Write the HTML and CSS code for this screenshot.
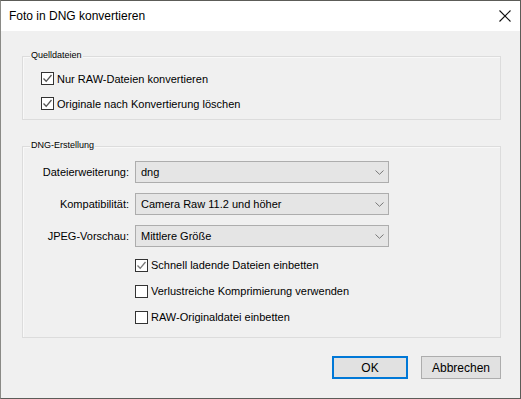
FILE: index.html
```html
<!DOCTYPE html>
<html lang="de">
<head>
  <meta charset="UTF-8" />
  <title>Foto in DNG konvertieren</title>
  <link rel="stylesheet" href="styles.css">
</head>
<body>

  <div class="window">
    <!-- Titelleiste -->
    <div class="titlebar">
      <span class="title">Foto in DNG konvertieren</span>
      <svg class="close" width="12" height="12" viewBox="0 0 12 12">
        <path d="M0.5 0.5 L11.5 11.5 M11.5 0.5 L0.5 11.5" stroke="#111" stroke-width="1.1" fill="none" />
      </svg>
    </div>

    <div class="content">
      <!-- Quelldateien -->
      <div class="group group-source">
        <span class="legend">Quelldateien</span>
        <div class="check">
          <span class="box"><svg width="11" height="11" viewBox="0 0 11 11"><path d="M1.5 5.5 L4.2 8.3 L9.5 2" stroke="#555" stroke-width="1.3" fill="none" /></svg></span>
          Nur RAW-Dateien konvertieren
        </div>
        <div class="check">
          <span class="box"><svg width="11" height="11" viewBox="0 0 11 11"><path d="M1.5 5.5 L4.2 8.3 L9.5 2" stroke="#555" stroke-width="1.3" fill="none" /></svg></span>
          Originale nach Konvertierung löschen
        </div>
      </div>

      <!-- DNG-Erstellung -->
      <div class="group group-dng">
        <span class="legend">DNG-Erstellung</span>
        <div class="fields">
          <span class="field-label">Dateierweiterung:</span>
          <div class="select"><span>dng</span><svg width="9" height="5" viewBox="0 0 9 5"><path d="M0.5 0.5 L4.5 4.3 L8.5 0.5" stroke="#777" fill="none" /></svg></div>

          <span class="field-label">Kompatibilität:</span>
          <div class="select"><span>Camera Raw 11.2 und höher</span><svg width="9" height="5" viewBox="0 0 9 5"><path d="M0.5 0.5 L4.5 4.3 L8.5 0.5" stroke="#777" fill="none" /></svg></div>

          <span class="field-label">JPEG-Vorschau:</span>
          <div class="select"><span>Mittlere Größe</span><svg width="9" height="5" viewBox="0 0 9 5"><path d="M0.5 0.5 L4.5 4.3 L8.5 0.5" stroke="#777" fill="none" /></svg></div>
        </div>

        <div class="options">
          <div class="check check-tall">
            <span class="box"><svg width="11" height="11" viewBox="0 0 11 11"><path d="M1.5 5.5 L4.2 8.3 L9.5 2" stroke="#777" stroke-width="1.3" fill="none" /></svg></span>
            Schnell ladende Dateien einbetten
          </div>
          <div class="check check-tall">
            <span class="box"></span>
            Verlustreiche Komprimierung verwenden
          </div>
          <div class="check check-tall">
            <span class="box"></span>
            RAW-Originaldatei einbetten
          </div>
        </div>
      </div>

      <!-- Buttons -->
      <div class="buttons">
        <button class="btn btn-default">OK</button>
        <button class="btn">Abbrechen</button>
      </div>
    </div>
  </div>

</body>
</html>
```

FILE: styles.css
```css
body {
  margin: 0;
  padding: 0;
  background: #3a3c34;
  font-family: 'Liberation Sans', Arial, sans-serif;
  color: #000;
}

.window {
  width: 521px;
  height: 399px;
  box-sizing: border-box;
  border: 1px solid #5c5c58;
  border-left-color: #8a8a86;
  background: #f0f0f0;
}

/* Titelleiste */
.titlebar {
  height: 30px;
  background: #fff;
  display: flex;
  align-items: center;
  justify-content: space-between;
  padding: 0 9px 0 8px;
}

.title {
  font-size: 12px;
  color: #000;
}

.close {
  display: block;
  margin-top: -1px;
}

/* Inhalt */
.content {
  padding: 25px 19px 0 21px;
}

.group {
  position: relative;
  border: 1px solid #dcdcdc;
  box-shadow: inset 1px 1px 0 #f8f8f8;
}

.legend {
  position: absolute;
  top: -7px;
  left: 7px;
  padding: 0 1px;
  background: #f0f0f0;
  font-size: 9px;
  line-height: 11px;
  color: #000;
}

.group-source {
  height: 62px;
  padding: 9px 0 0 18px;
  box-sizing: border-box;
  height: 64px;
}

.group-dng {
  margin-top: 26px;
  padding: 14px 0 7px 0;
}

.check {
  display: flex;
  align-items: center;
  gap: 3px;
  height: 25px;
  font-size: 11px;
}

.check-tall {
  height: 26px;
}

.box {
  width: 13px;
  height: 13px;
  box-sizing: border-box;
  border: 1px solid #333;
  background: #fff;
  display: flex;
  align-items: center;
  justify-content: center;
  flex-shrink: 0;
}

.box svg {
  display: block;
}

/* Auswahlfelder */
.fields {
  display: grid;
  grid-template-columns: 106px 254px;
  column-gap: 6px;
  row-gap: 10px;
  align-items: center;
}

.field-label {
  text-align: right;
  font-size: 11px;
}

.select {
  height: 22px;
  box-sizing: border-box;
  border: 1px solid #adadad;
  background: #e5e5e5;
  display: flex;
  align-items: center;
  justify-content: space-between;
  padding: 0 4px 0 5px;
  font-size: 11px;
}

.select svg {
  display: block;
}

.options {
  margin-top: 5px;
  padding-left: 112px;
}

/* Buttons */
.buttons {
  display: flex;
  justify-content: flex-end;
  gap: 13px;
  margin-top: 18px;
}

.btn {
  height: 23px;
  width: 80px;
  box-sizing: border-box;
  border: 1px solid #adadad;
  background: #e1e1e1;
  font-family: 'Liberation Sans', Arial, sans-serif;
  font-size: 12px;
  color: #000;
  padding: 0;
}

.btn-default {
  width: 76px;
  border: 2px solid #0078d7;
}
```
